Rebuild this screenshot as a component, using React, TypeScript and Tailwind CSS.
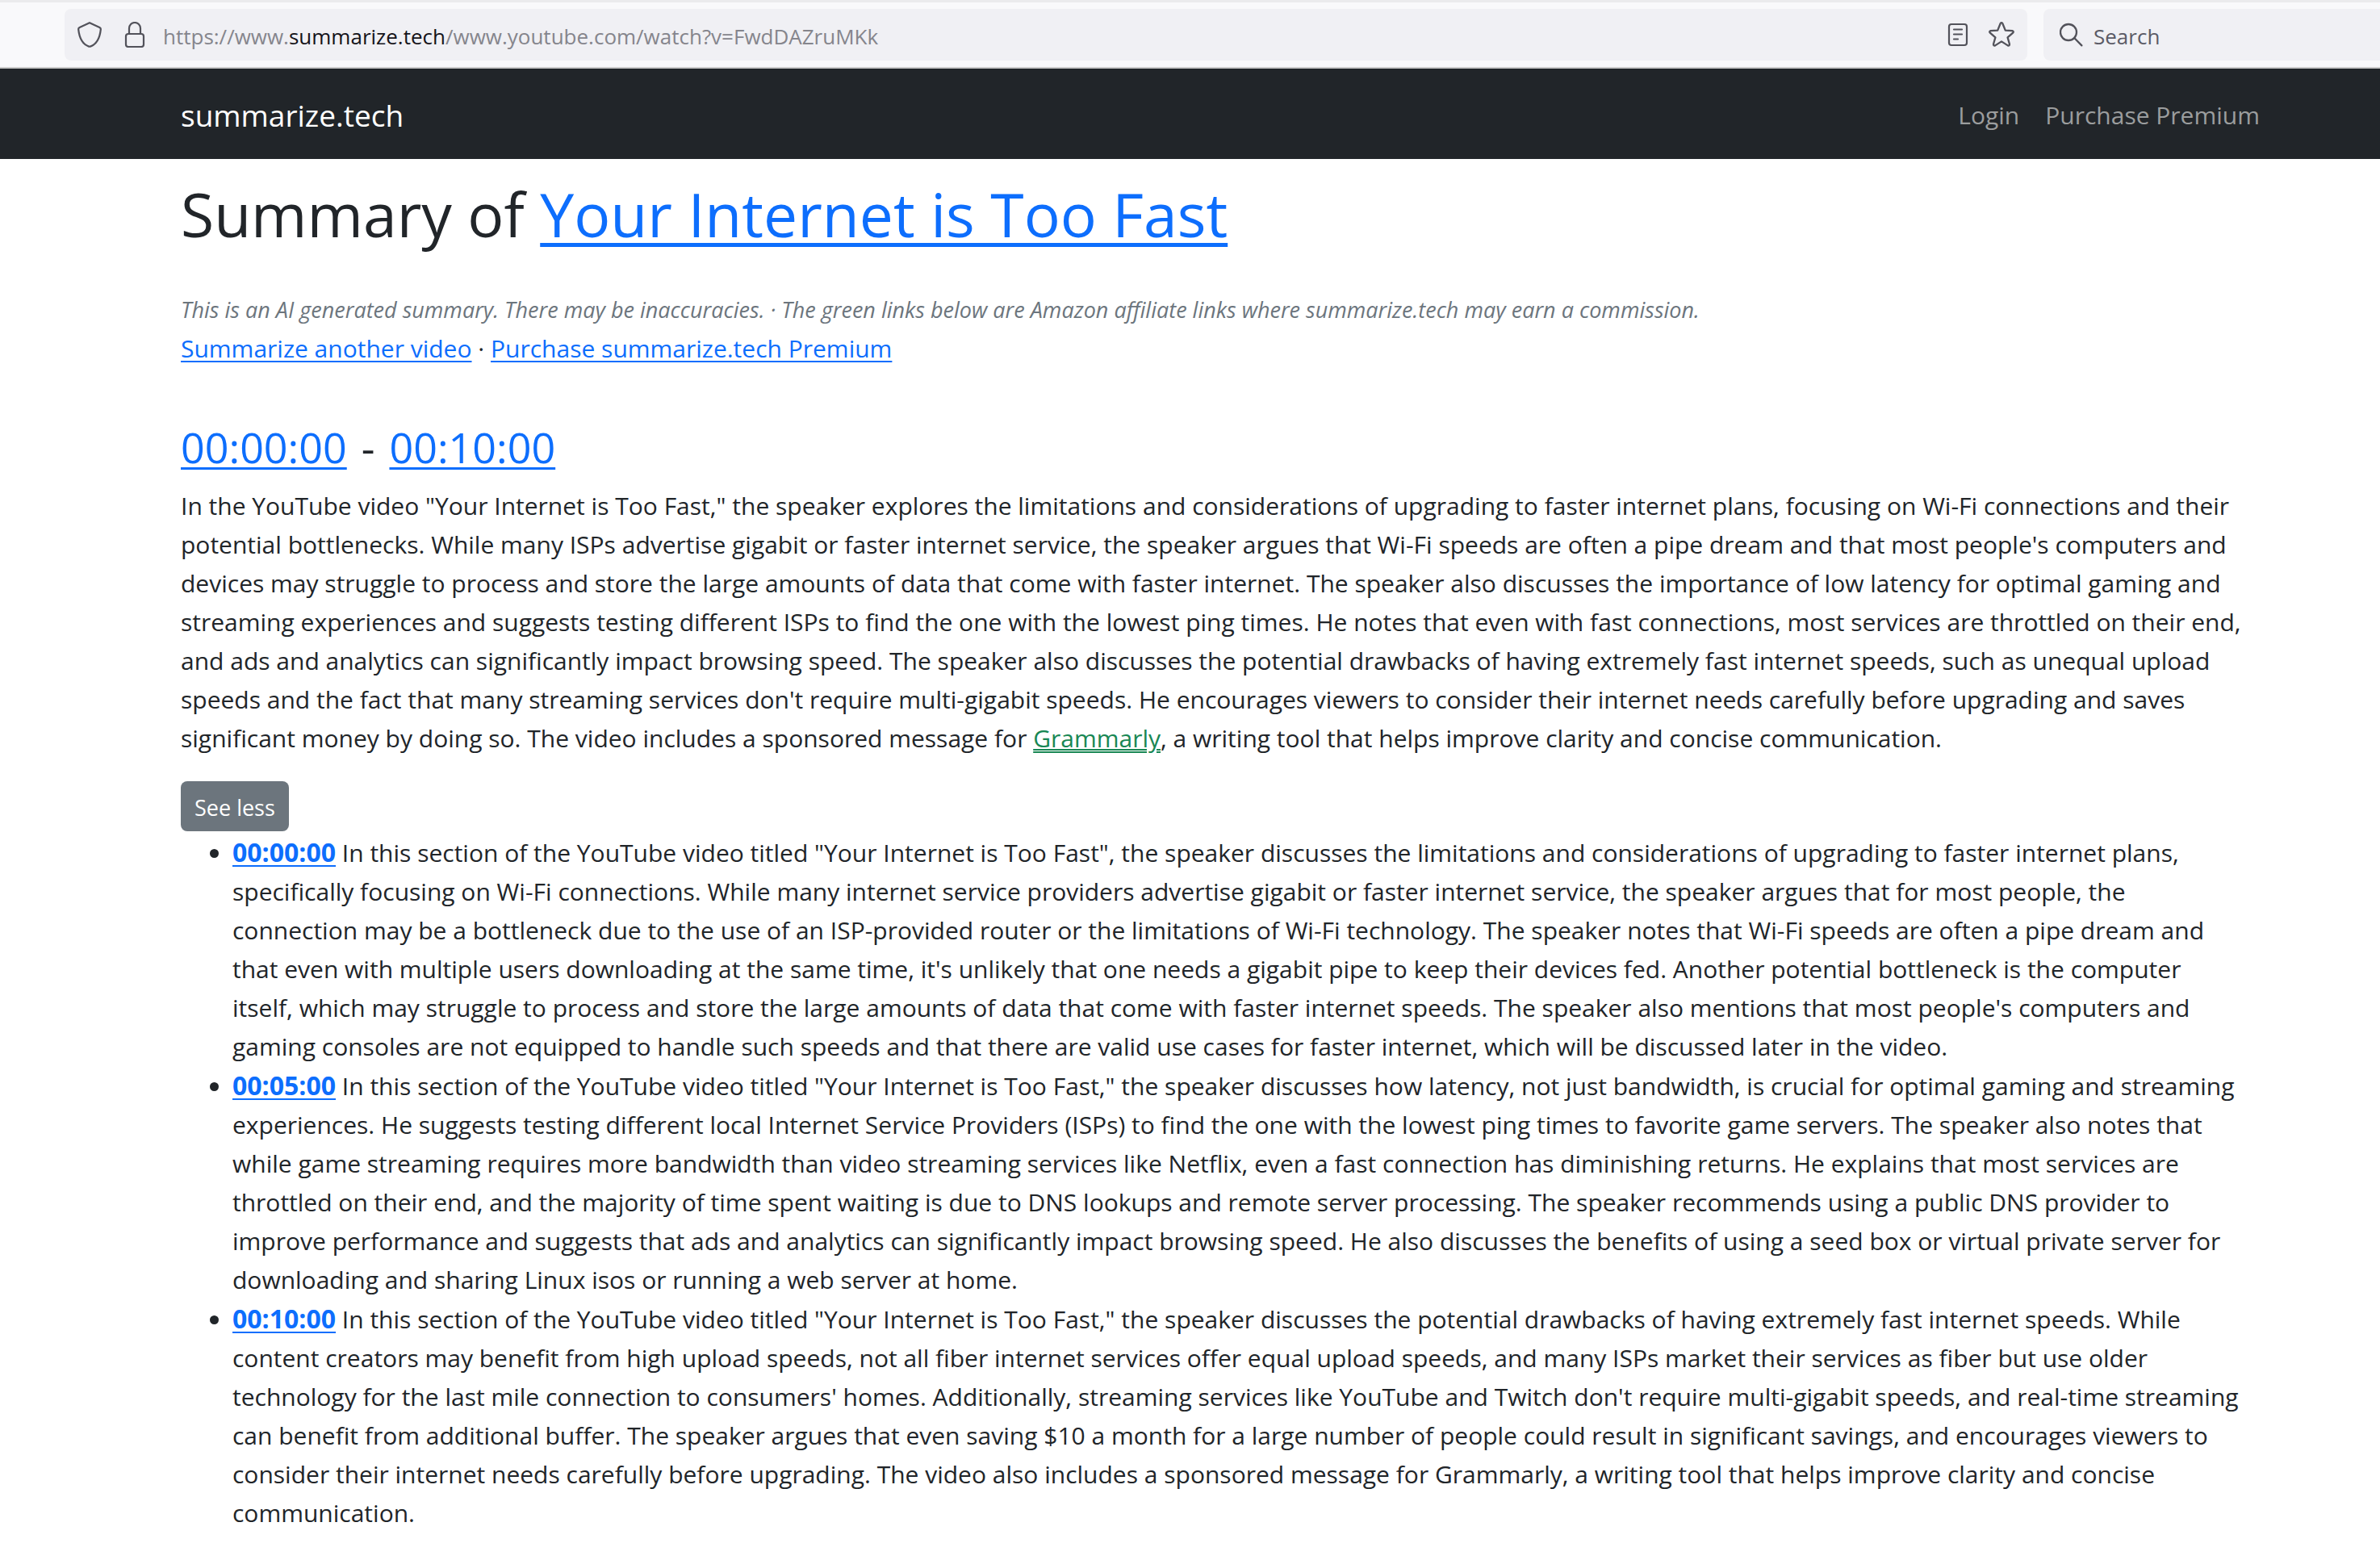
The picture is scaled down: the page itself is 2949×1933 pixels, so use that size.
import React from 'react';

const link = 'text-[#0d6efd] underline underline-offset-4 decoration-2';

function TimeLink({ time, className = '' }: { time: string; className?: string }) {
  return (
    <a href={`#t=${time}`} className={`text-[#0d6efd] underline ${className}`}>
      {time}
    </a>
  );
}

const sections = [
  {
    time: '00:00:00',
    text: `In this section of the YouTube video titled "Your Internet is Too Fast", the speaker discusses the limitations and considerations of upgrading to faster internet plans, specifically focusing on Wi-Fi connections. While many internet service providers advertise gigabit or faster internet service, the speaker argues that for most people, the connection may be a bottleneck due to the use of an ISP-provided router or the limitations of Wi-Fi technology. The speaker notes that Wi-Fi speeds are often a pipe dream and that even with multiple users downloading at the same time, it's unlikely that one needs a gigabit pipe to keep their devices fed. Another potential bottleneck is the computer itself, which may struggle to process and store the large amounts of data that come with faster internet speeds. The speaker also mentions that most people's computers and gaming consoles are not equipped to handle such speeds and that there are valid use cases for faster internet, which will be discussed later in the video.`,
  },
  {
    time: '00:05:00',
    text: `In this section of the YouTube video titled "Your Internet is Too Fast," the speaker discusses how latency, not just bandwidth, is crucial for optimal gaming and streaming experiences. He suggests testing different local Internet Service Providers (ISPs) to find the one with the lowest ping times to favorite game servers. The speaker also notes that while game streaming requires more bandwidth than video streaming services like Netflix, even a fast connection has diminishing returns. He explains that most services are throttled on their end, and the majority of time spent waiting is due to DNS lookups and remote server processing. The speaker recommends using a public DNS provider to improve performance and suggests that ads and analytics can significantly impact browsing speed. He also discusses the benefits of using a seed box or virtual private server for downloading and sharing Linux isos or running a web server at home.`,
  },
  {
    time: '00:10:00',
    text: `In this section of the YouTube video titled "Your Internet is Too Fast," the speaker discusses the potential drawbacks of having extremely fast internet speeds. While content creators may benefit from high upload speeds, not all fiber internet services offer equal upload speeds, and many ISPs market their services as fiber but use older technology for the last mile connection to consumers' homes. Additionally, streaming services like YouTube and Twitch don't require multi-gigabit speeds, and real-time streaming can benefit from additional buffer. The speaker argues that even saving $10 a month for a large number of people could result in significant savings, and encourages viewers to consider their internet needs carefully before upgrading. The video also includes a sponsored message for Grammarly, a writing tool that helps improve clarity and concise communication.`,
  },
];

function BrowserBar() {
  return (
    <div className="flex gap-5 border-t-[3px] border-b-2 border-t-[#ebebed] border-b-[#cccccc] bg-[#f9f9fb] py-2 pl-20 text-[26px] text-[#5b5b66]">
      <div className="flex h-16 flex-1 items-center rounded-lg bg-[#f0f0f4] pl-4 pr-4">
        <svg className="size-8 shrink-0" viewBox="0 0 32 32" fill="none" stroke="#52525a" strokeWidth="2.2" strokeLinejoin="round" aria-hidden="true">
          <path d="M15 1.2 L27.4 7 C28.6 7.6 29 8.4 28.8 9.6 C27.6 21 24 27.6 15.8 30.6 Q15 30.9 14.2 30.6 C6 27.6 2.4 21 1.2 9.6 C1 8.4 1.4 7.6 2.6 7 Z" />
        </svg>
        <svg className="ml-[26px] h-8 w-7 shrink-0" viewBox="0 0 28 32" fill="none" stroke="#52525a" strokeWidth="2.2" aria-hidden="true">
          <rect x="2" y="15" width="22" height="16" rx="3" />
          <path d="M6 15 V8 a7 7 0 0 1 14 0 V15" />
        </svg>
        <div className="ml-5 flex-1 pt-[3px] text-[#85858c]">
          https://www.<span className="text-[#15141a]">summarize.tech</span>/www.youtube.com/watch?v=FwdDAZruMKk
        </div>
        <button type="button" aria-label="Reader view" className="mr-6">
          <svg className="h-8 w-7" viewBox="0 0 28 32" fill="none" stroke="#52525a" strokeWidth="2.2" strokeLinecap="round" aria-hidden="true">
            <rect x="3" y="3" width="22" height="26" rx="3" />
            <path d="M9 9.5 H19 M9 15.5 H19 M9 21.5 H14" />
          </svg>
        </button>
        <button type="button" aria-label="Bookmark this page">
          <svg className="h-9 w-8" viewBox="2 0 32 36" fill="none" stroke="#52525a" strokeWidth="2.3" strokeLinejoin="round" aria-hidden="true">
            <path d="M16.6 4.2 Q18 2.2 19.4 4.2 L22.8 12.6 L31.4 13.2 Q33.6 13.8 32.2 15.6 L25.6 21.4 L28 29.8 Q28 32.2 25.8 31.4 L18 26.4 L10.2 31.4 Q8 32.2 8 29.8 L10.4 21.4 L3.8 15.6 Q2.4 13.8 4.6 13.2 L13.2 12.6 Z" />
          </svg>
        </button>
      </div>
      <label className="flex h-16 w-[417px] items-center gap-[10px] rounded-l-lg bg-[#f0f0f4] pl-5">
        <svg className="size-8 shrink-0" viewBox="0 0 32 32" fill="none" stroke="#52525a" strokeWidth="2.3" strokeLinecap="round" aria-hidden="true">
          <circle cx="11" cy="13" r="10" />
          <path d="M18.2 20 L27.4 29.4" />
        </svg>
        <input type="text" placeholder="Search" aria-label="Search" className="min-w-0 flex-1 bg-transparent pt-[3px] outline-none placeholder:text-[#5b5b66]" />
      </label>
    </div>
  );
}

export default function App() {
  return (
    <div className="min-h-screen bg-white font-['Open_Sans',sans-serif] text-[30px] leading-[48px] text-[#212529]">
      <BrowserBar />
      <nav className="flex h-28 items-center bg-[#212529] pl-[224px] pr-[149px] pt-1 text-[#9b9d9e]">
        <a href="#home" className="flex-1 text-[37px] text-white">summarize.tech</a>
        <div className="flex gap-8">
          <a href="#login">Login</a>
          <a href="#premium">Purchase Premium</a>
        </div>
      </nav>
      <main className="pl-[224px] pr-[133px] pt-5">
        <h1 className="text-[75px] leading-[96px]">
          Summary of{' '}
          <a href="#video" className="text-[#0d6efd] underline decoration-[5px] underline-offset-[7px]">
            Your Internet is Too Fast
          </a>
        </h1>
        <p className="mt-[47px] text-[27px] italic text-[#6c757d]">
          This is an AI generated summary. There may be inaccuracies. · The green links below are Amazon affiliate links where summarize.tech may earn a commission.
        </p>
        <p>
          <a href="#another" className={link}>Summarize another video</a> ·{' '}
          <a href="#premium" className={link}>Purchase summarize.tech Premium</a>
        </p>
        <h3 className="mt-16 flex gap-[18px] text-[52px] leading-[68px]">
          <TimeLink time="00:00:00" className="decoration-3 underline-offset-[5px]" />
          <span>-</span>
          <TimeLink time="00:10:00" className="decoration-3 underline-offset-[5px]" />
        </h3>
        <p className="mt-[15px]">
          In the YouTube video "Your Internet is Too Fast," the speaker explores the limitations and considerations of upgrading to faster internet plans, focusing on Wi-Fi connections and their potential bottlenecks. While many ISPs advertise gigabit or faster internet service, the speaker argues that Wi-Fi speeds are often a pipe dream and that most people's computers and devices may struggle to process and store the large amounts of data that come with faster internet. The speaker also discusses the importance of low latency for optimal gaming and streaming experiences and suggests testing different ISPs to find the one with the lowest ping times. He notes that even with fast connections, most services are throttled on their end, and ads and analytics can significantly impact browsing speed. The speaker also discusses the potential drawbacks of having extremely fast internet speeds, such as unequal upload speeds and the fact that many streaming services don't require multi-gigabit speeds. He encourages viewers to consider their internet needs carefully before upgrading and saves significant money by doing so. The video includes a sponsored message for{' '}
          <a href="#grammarly" className="text-[#198754] underline decoration-double decoration-2 underline-offset-2">Grammarly</a>, a writing tool that helps improve clarity and concise communication.
        </p>
        <button type="button" className="mt-[29px] mb-0.5 block h-[62px] rounded-lg bg-[#6c757d] px-[17px] pt-1 text-[27px] text-white">
          See less
        </button>
        <ul className="list-disc pl-16 pr-9">
          {sections.map((s) => (
            <li key={s.time}>
              <TimeLink time={s.time} className="text-[32px] font-bold decoration-2 underline-offset-4" /> {s.text}
            </li>
          ))}
        </ul>
      </main>
    </div>
  );
}
